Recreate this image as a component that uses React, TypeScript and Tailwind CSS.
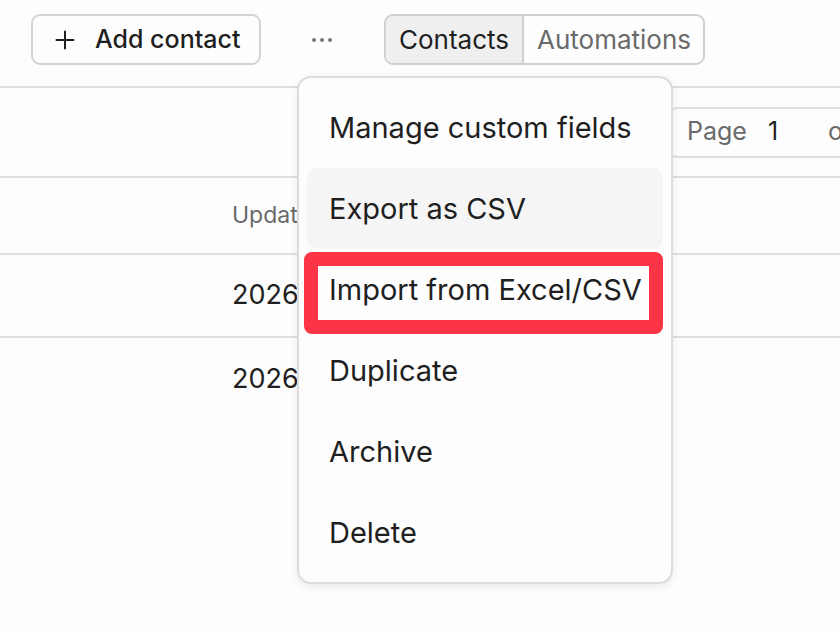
import * as React from 'react';

const menuItems = ['Manage custom fields', 'Export as CSV', 'Import from Excel/CSV', 'Duplicate', 'Archive', 'Delete'];

function DotsIcon() {
  return (
    <svg width="22" height="6" viewBox="0 0 22 6" className="text-[#7a7a7a]">
      <circle cx="3" cy="3" r="2" fill="currentColor" />
      <circle cx="11" cy="3" r="2" fill="currentColor" />
      <circle cx="19" cy="3" r="2" fill="currentColor" />
    </svg>
  );
}

function PlusIcon() {
  return (
    <svg width="20" height="20" viewBox="0 0 20 20" className="text-[#1f1f1f]">
      <path d="M10 1.5v17M1.5 10h17" stroke="currentColor" strokeWidth="2" strokeLinecap="round" />
    </svg>
  );
}

function ActionsMenu() {
  return (
    <div className="absolute left-[297px] top-[76px] flex w-[376px] flex-col rounded-[14px] border-2 border-[#dcdcdc] bg-[#fdfdfd] px-[8px] py-[9px] shadow-[0_3px_8px_rgba(0,0,0,0.08)]">
      {menuItems.map((label, i) => (
        <div
          key={label}
          className={
            i === 1
              ? 'relative flex h-[81px] items-center rounded-[10px] bg-[#f5f5f5] pl-[22px] text-[29px] text-[#1f1f1f]'
              : 'relative flex h-[81px] items-center rounded-[10px] pl-[22px] text-[29px] text-[#1f1f1f]'
          }
        >
          {label}
          {i === 2 ? (
            <div className="absolute -left-[3px] top-[3px] -bottom-[4px] right-0 rounded-[8px] border-[14px] border-[#fc3446]" />
          ) : null}
        </div>
      ))}
    </div>
  );
}

export default function App() {
  return (
    <div
      className="relative h-[632px] w-[840px] overflow-hidden bg-[#fdfdfd]"
      style={{ fontFamily: 'Inter, "Noto Sans", sans-serif' }}
    >
      {/* top bar */}
      <div className="flex h-[88px] items-start border-b-2 border-[#dfdfdf] pt-[14px]">
        <button className="ml-[31px] flex h-[51px] w-[230px] items-center gap-[20px] rounded-[9px] border-2 border-[#d4d4d4] pl-[22px] text-[25px] font-[450] text-[#1f1f1f]">
          <PlusIcon />
          Add contact
        </button>
        <div className="ml-[50px] flex h-[51px] items-center">
          <DotsIcon />
        </div>
        <div className="ml-[51px] flex h-[51px] overflow-hidden rounded-[9px] border-2 border-[#d0d0d0] text-[26px]">
          <div className="flex items-center border-r-2 border-[#d0d0d0] bg-[#efefef] px-[13px] text-[#1f1f1f]">Contacts</div>
          <div className="flex items-center pl-[13px] pr-[12px] text-[#6a6a6a]">Automations</div>
        </div>
      </div>

      {/* toolbar with pager */}
      <div className="flex h-[90px] items-center justify-end border-b-2 border-[#dfdfdf]">
        <div className="flex h-[51px] w-[172px] items-center rounded-l-[9px] border-y-2 border-l-2 border-[#dfdfdf] pl-[17px] text-[25px]">
          <span className="text-[#6a6a6a]">Page</span>
          <span className="ml-[21px] text-[#1f1f1f]">1</span>
          <span className="ml-[50px] text-[#6a6a6a]">of</span>
        </div>
      </div>

      {/* table */}
      <div className="flex h-[77px] items-center border-b-2 border-[#dfdfdf] pl-[232px] text-[23px] text-[#6a6a6a]">
        Updated
      </div>
      <div className="flex h-[83px] items-center border-b-2 border-[#dfdfdf] pl-[232px] text-[27px] text-[#1f1f1f]">
        2026-01-14
      </div>
      <div className="flex h-[83px] items-center pl-[232px] text-[27px] text-[#1f1f1f]">2026-01-12</div>

      <ActionsMenu />
    </div>
  );
}
